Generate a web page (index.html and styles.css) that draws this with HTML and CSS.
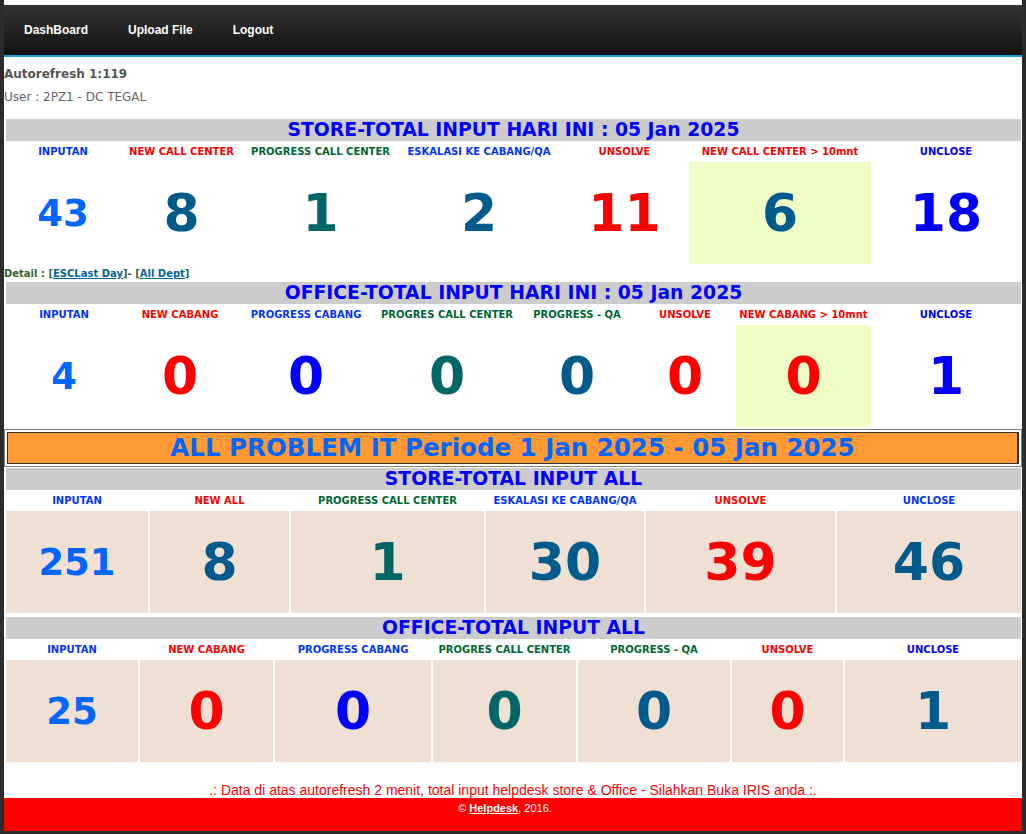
FILE: index.html
```html
<!DOCTYPE html>
<html lang="id">
<head>
<meta charset="utf-8">
<title>Helpdesk Dashboard</title>
<link rel="stylesheet" href="styles.css">
</head>
<body>
<nav class="navbar">
  <a href="#">DashBoard</a>
  <a href="#">Upload File</a>
  <a href="#">Logout</a>
</nav>

<div class="info">
  <div class="auto">Autorefresh 1:119</div>
  <div class="user">User : 2PZ1 - DC TEGAL</div>
</div>

<section class="panel first">
  <h2 class="bar">STORE-TOTAL INPUT HARI INI : 05 Jan 2025</h2>
  <div class="labels cols-a">
    <span class="l-blue">INPUTAN</span>
    <span class="l-red">NEW CALL CENTER</span>
    <span class="l-green">PROGRESS CALL CENTER</span>
    <span class="l-blue">ESKALASI KE CABANG/QA</span>
    <span class="l-red">UNSOLVE</span>
    <span class="l-red">NEW CALL CENTER &gt; 10mnt</span>
    <span class="l-pure">UNCLOSE</span>
  </div>
  <div class="nums cols-a">
    <span class="sm n-light">43</span>
    <span class="n-dark">8</span>
    <span class="n-teal">1</span>
    <span class="n-dark">2</span>
    <span class="n-red">11</span>
    <span class="n-dark hl">6</span>
    <span class="n-blue">18</span>
  </div>
</section>

<div class="detail">Detail : [<a href="#">ESCLast Day</a>]- [<a href="#">All Dept</a>]</div>

<section class="panel">
  <h2 class="bar">OFFICE-TOTAL INPUT HARI INI : 05 Jan 2025</h2>
  <div class="labels cols-b">
    <span class="l-blue">INPUTAN</span>
    <span class="l-red">NEW CABANG</span>
    <span class="l-blue">PROGRESS CABANG</span>
    <span class="l-green">PROGRES CALL CENTER</span>
    <span class="l-green">PROGRESS - QA</span>
    <span class="l-red">UNSOLVE</span>
    <span class="l-red">NEW CABANG &gt; 10mnt</span>
    <span class="l-pure">UNCLOSE</span>
  </div>
  <div class="nums cols-b">
    <span class="sm n-light">4</span>
    <span class="n-red">0</span>
    <span class="n-blue">0</span>
    <span class="n-teal">0</span>
    <span class="n-dark">0</span>
    <span class="n-red">0</span>
    <span class="n-red hl">0</span>
    <span class="n-blue">1</span>
  </div>
</section>

<div class="banner">
  <h1 class="banner-title">ALL PROBLEM IT Periode 1 Jan 2025 - 05 Jan 2025</h1>
</div>

<section class="panel all store-all">
  <h2 class="bar">STORE-TOTAL INPUT ALL</h2>
  <div class="labels cols-c">
    <span class="l-blue">INPUTAN</span>
    <span class="l-red">NEW ALL</span>
    <span class="l-green">PROGRESS CALL CENTER</span>
    <span class="l-blue">ESKALASI KE CABANG/QA</span>
    <span class="l-red">UNSOLVE</span>
    <span class="l-blue">UNCLOSE</span>
  </div>
  <div class="nums cols-c">
    <span class="sm n-light">251</span>
    <span class="n-dark">8</span>
    <span class="n-teal">1</span>
    <span class="n-dark">30</span>
    <span class="n-red">39</span>
    <span class="n-dark">46</span>
  </div>
</section>

<section class="panel all office-all">
  <h2 class="bar">OFFICE-TOTAL INPUT ALL</h2>
  <div class="labels cols-d">
    <span class="l-blue">INPUTAN</span>
    <span class="l-red">NEW CABANG</span>
    <span class="l-blue">PROGRESS CABANG</span>
    <span class="l-green">PROGRES CALL CENTER</span>
    <span class="l-green">PROGRESS - QA</span>
    <span class="l-red">UNSOLVE</span>
    <span class="l-pure">UNCLOSE</span>
  </div>
  <div class="nums cols-d">
    <span class="sm n-light">25</span>
    <span class="n-red">0</span>
    <span class="n-blue">0</span>
    <span class="n-teal">0</span>
    <span class="n-dark">0</span>
    <span class="n-red">0</span>
    <span class="n-dark">1</span>
  </div>
</section>

<p class="message">.: Data di atas autorefresh 2 menit, total input helpdesk store &amp; Office - Silahkan Buka IRIS anda :.</p>

<footer class="footer">&copy; <a href="#">Helpdesk</a>, 2016.</footer>
</body>
</html>
```

FILE: styles.css
```css
html {
  overflow: hidden;
  background: #fff;
}

body {
  margin: 0;
  padding-top: 5px;
  border-left: 4px solid #2c2c2c;
  border-right: 4px solid #2c2c2c;
  border-bottom: 3px solid #2c2c2c;
  background: #fff;
  font-family: "DejaVu Sans", Verdana, sans-serif;
}

/* navbar */
.navbar {
  display: flex;
  height: 50px;
  background: linear-gradient(#333333, #121212);
  border-bottom: 2px solid #1ba1e2;
}

.navbar a {
  padding: 0 20px;
  color: #fff;
  font: bold 12px/50px "Liberation Sans", Arial, sans-serif;
  text-decoration: none;
}

/* info */
.info {
  padding-top: 7px;
  font-size: 12px;
}

.auto {
  font-weight: bold;
  color: #555;
  line-height: 20px;
}

.user {
  color: #666;
  line-height: 20px;
  margin-top: 3px;
}

/* panels */
.panel {
  margin: 0 1px 0 2px;
}

.panel.first {
  margin-top: 12px;
}

.bar {
  margin: 0;
  height: 22px;
  line-height: 22px;
  background: #cccccc;
  color: #0000ff;
  text-align: center;
  font-size: 18.8px;
  font-weight: bold;
}

.labels {
  display: grid;
  height: 21px;
  align-items: center;
  text-align: center;
  font-size: 10px;
  font-weight: bold;
}

.nums {
  display: grid;
  height: 102px;
}

.nums > span {
  display: flex;
  align-items: center;
  justify-content: center;
  font-size: 52px;
  font-weight: bold;
}

.nums > span.sm {
  font-size: 37px;
}

.nums > span.hl {
  background: #effcc5;
}

.all .nums > span {
  background: #efe0d3;
}

.cols-a { grid-template-columns: 114px 123px 155px 162px 129px 182px 150px; }
.cols-b { grid-template-columns: 116px 116px 136px 146px 114px 102px 135px 150px; }
.cols-c { grid-template-columns: 142px 139px 193px 158px 189px 184px; column-gap: 2px; }
.cols-d { grid-template-columns: 132px 133px 156px 143px 152px 111px 176px; column-gap: 2px; }

.store-all { margin-top: 1px; }
.office-all { margin-top: 4px; }

/* label colours */
.l-blue { color: #0033ff; }
.l-pure { color: #0000ff; }
.l-red { color: #ff0000; }
.l-green { color: #006633; }

/* number colours */
.n-light { color: #0066ff; }
.n-dark { color: #005b8c; }
.n-teal { color: #006666; }
.n-red { color: #ff0000; }
.n-blue { color: #0000ff; }

/* detail line */
.detail {
  height: 18px;
  line-height: 20px;
  font-size: 10px;
  font-weight: bold;
  color: #336633;
}

.detail a {
  color: #006699;
  text-decoration: underline;
}

/* orange banner */
.banner {
  margin-top: 2px;
  height: 38px;
  box-sizing: border-box;
  border: 1px solid #808080;
  padding: 2px;
}

.banner-title {
  margin: 0;
  height: 32px;
  box-sizing: border-box;
  border: 1px solid #333;
  border-right-width: 2px;
  background: #ff9933;
  color: #0066ff;
  text-align: center;
  font-size: 24.5px;
  font-weight: bold;
  line-height: 30px;
}

/* bottom */
.message {
  margin: 0;
  padding-top: 20px;
  text-align: center;
  color: #ff0000;
  font: 14px/16px "Liberation Sans", Arial, sans-serif;
}

.footer {
  height: 33px;
  box-sizing: border-box;
  padding: 3px 16px 0 0;
  background: #ff0000;
  color: #fff;
  text-align: center;
  font: 11px/14px "Liberation Sans", Arial, sans-serif;
}

.footer a {
  color: #fff;
  font-weight: bold;
  text-decoration: underline;
}
```
